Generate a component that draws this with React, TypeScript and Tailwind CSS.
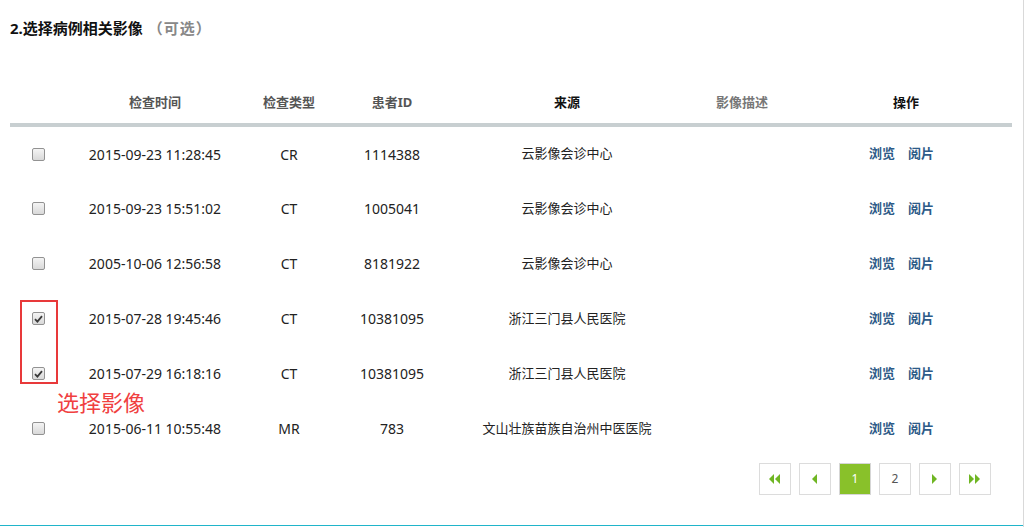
import React from "react";

type Row = {
  time: string;
  type: string;
  pid: string;
  source: string;
  checked: boolean;
};

const rows: Row[] = [
  { time: "2015-09-23 11:28:45", type: "CR", pid: "1114388", source: "云影像会诊中心", checked: false },
  { time: "2015-09-23 15:51:02", type: "CT", pid: "1005041", source: "云影像会诊中心", checked: false },
  { time: "2005-10-06 12:56:58", type: "CT", pid: "8181922", source: "云影像会诊中心", checked: false },
  { time: "2015-07-28 19:45:46", type: "CT", pid: "10381095", source: "浙江三门县人民医院", checked: true },
  { time: "2015-07-29 16:18:16", type: "CT", pid: "10381095", source: "浙江三门县人民医院", checked: true },
  { time: "2015-06-11 10:55:48", type: "MR", pid: "783", source: "文山壮族苗族自治州中医医院", checked: false },
];

const font = { fontFamily: '"Noto Sans", "Noto Sans CJK SC", sans-serif' };

// grid columns: checkbox | time | type | id | source | desc | ops
const cols = "grid grid-cols-[56px_178px_90px_116px_234px_116px_212px]";

function Checkbox({ checked }: { checked: boolean }) {
  return (
    <span className="flex h-[13px] w-[13px] items-center justify-center rounded-[2px] border border-[#929292] bg-gradient-to-b from-[#f4f4f4] to-[#d9d9d9]">
      {checked && (
        <svg width="9" height="8" viewBox="0 0 9 8">
          <path d="M1 4.2 L3.4 6.6 L8 1.2" fill="none" stroke="#3a3a3a" strokeWidth="1.8" />
        </svg>
      )}
    </span>
  );
}

function Arrow({ dir, double }: { dir: "l" | "r"; double?: boolean }) {
  const tri = (x: number) =>
    dir === "l" ? `M${x + 5} 0 L${x} 5 L${x + 5} 10 Z` : `M${x} 0 L${x + 5} 5 L${x} 10 Z`;
  return (
    <svg width={double ? 12 : 6} height="10" viewBox={`0 0 ${double ? 12 : 6} 10`}>
      <path d={tri(0)} fill="#6fb623" />
      {double && <path d={tri(6)} fill="#6fb623" />}
    </svg>
  );
}

function PageBtn({ children, active }: { children: React.ReactNode; active?: boolean }) {
  return (
    <div
      className={
        "flex h-[32px] w-[32px] items-center justify-center border text-[12px] " +
        (active ? "border-[#d6d6d6] bg-[#89c12a] text-white" : "border-[#dcdcdc] bg-white text-[#555]")
      }
    >
      {children}
    </div>
  );
}

export default function App() {
  return (
    <div className="flex h-[527px] w-[1026px] bg-white text-[#222]" style={font}>
      <div className="relative h-[526px] w-[1023px] border-b border-[#20b5ca]">
        <div className="flex h-[93px] items-start px-[10px] pt-[17px] text-[15px] font-bold">
          <span className="text-[#111]">2.选择病例相关影像</span>
          <span className="ml-[5px] tracking-[1px] text-[#888]">（可选）</span>
        </div>

        <div className="ml-[10px] w-[1002px]">
          <div className={cols + " h-[30px] items-start text-center text-[13px] font-bold"}>
            <div />
            <div className="text-[#555]">检查时间</div>
            <div className="text-[#555]">检查类型</div>
            <div className="text-[#555]">患者ID</div>
            <div className="text-[#111]">来源</div>
            <div className="font-semibold text-[#777]">影像描述</div>
            <div className="text-[#111]">操作</div>
          </div>
          <div className="h-[4px] bg-[#c8cfd1]" />

          {rows.map((r, i) => (
            <div key={i} className={cols + (i === 0 ? " h-[54px]" : " h-[55px]") + " items-center text-center"}>
              <div className="flex justify-center pl-[1px]">
                <Checkbox checked={r.checked} />
              </div>
              <div className="text-[14px]">{r.time}</div>
              <div className="text-[14px]">{r.type}</div>
              <div className="text-[14px]">{r.pid}</div>
              <div className="text-[13px]">{r.source}</div>
              <div />
              <div className="flex justify-center gap-[13px] pr-[9px] text-[13px] font-semibold text-[#2e5b88]">
                <span>浏览</span>
                <span>阅片</span>
              </div>
            </div>
          ))}

          <div className="mt-[7px] flex justify-end gap-[8px] pr-[21px]">
            <PageBtn>
              <Arrow dir="l" double />
            </PageBtn>
            <PageBtn>
              <Arrow dir="l" />
            </PageBtn>
            <PageBtn active>1</PageBtn>
            <PageBtn>2</PageBtn>
            <PageBtn>
              <Arrow dir="r" />
            </PageBtn>
            <PageBtn>
              <Arrow dir="r" double />
            </PageBtn>
          </div>
        </div>

        <div className="absolute left-[20px] top-[300px] h-[84px] w-[38px] border-2 border-[#e8393a]" />
        <div className="absolute left-[57px] top-[388px] text-[22px] leading-[28px] text-[#f0403f]">选择影像</div>
      </div>
      <div className="h-[527px] w-[1px] bg-[#d9d9d9]" />
    </div>
  );
}
